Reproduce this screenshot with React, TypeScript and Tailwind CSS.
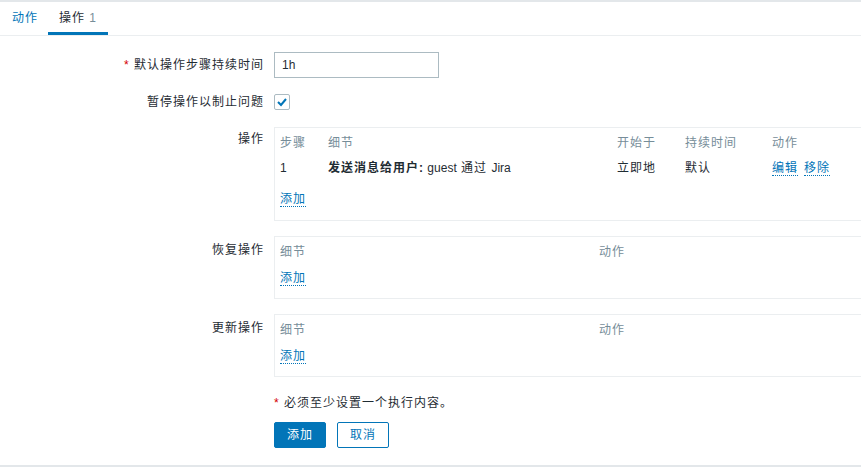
import React from "react";

const font = { fontFamily: '"Liberation Sans", Arial, "Noto Sans CJK SC", sans-serif' };

function Link({ children }: { children: React.ReactNode }) {
  return (
    <span className="text-[#0275b8] border-b border-dotted border-[#0275b8] leading-[13px] inline-block mr-[-1px]">
      {children}
    </span>
  );
}

function L({ children }: { children: React.ReactNode }) {
  return <span className="tracking-normal">{children}</span>;
}

function Row({ label, children, labelClass }: { label: React.ReactNode; children: React.ReactNode; labelClass: string }) {
  return (
    <div className="flex">
      <div className={"w-[263px] shrink-0 text-right " + labelClass}>
        <span className="mr-[-1px]">{label}</span>
      </div>
      <div className="ml-[11px] flex-1">{children}</div>
    </div>
  );
}

function SmallBox() {
  return (
    <div className="w-[620px] border border-[#ebeef0] pl-[5px] pb-[10px]">
      <div className="grid grid-cols-[319px_1fr] h-[30px] leading-[30px] text-[#768d99]">
        <div>细节</div>
        <div>动作</div>
      </div>
      <div className="h-[20px] mt-[1px] leading-[20px]">
        <Link>添加</Link>
      </div>
    </div>
  );
}

export default function App() {
  return (
    <div
      className="w-[861px] h-[467px] overflow-hidden bg-white border-t-2 border-b-2 border-[#e3e7ea] text-[12px] tracking-[1px] text-[#1f2c33] box-border"
      style={font}
    >
      <div className="flex h-[34px] border-b border-[#ebeef0]">
        <div className="pl-[12px] pr-[10px] pt-[9px] text-[#0275b8] leading-[14px]">动作</div>
        <div className="pl-[11px] pr-[12px] pt-[9px] leading-[14px] border-b-[3px] border-[#0275b8] h-[33px]">
          操作 <span className="text-[#768d99] tracking-normal">1</span>
        </div>
      </div>

      <div className="mt-[16px]">
        <Row
          labelClass="leading-[26px]"
          label={
            <>
              <span className="text-[#d40000]">*</span> 默认操作步骤持续时间
            </>
          }
        >
          <div className="w-[165px] h-[26px] border border-[#acbbc2] pl-[7px] leading-[24px] tracking-normal">1h</div>
        </Row>

        <div className="mt-[16px]">
          <Row labelClass="leading-[16px]" label="暂停操作以制止问题">
            <div className="w-[16px] h-[16px] border border-[#acbbc2] rounded-[2px] flex items-center justify-center">
              <svg width="12" height="12" viewBox="0 0 12 12">
                <path d="M2 6 L5 9 L10 3" fill="none" stroke="#0275b8" strokeWidth="2" />
              </svg>
            </div>
          </Row>
        </div>

        <div className="mt-[17px]">
          <Row labelClass="pt-[5px] leading-[14px]" label="操作">
            <div className="w-[620px] border border-[#ebeef0] pl-[5px] pb-[11px]">
              <div className="grid grid-cols-[48px_289px_68px_87px_1fr] h-[30px] leading-[30px] text-[#768d99]">
                <div>步骤</div>
                <div>细节</div>
                <div>开始于</div>
                <div>持续时间</div>
                <div>动作</div>
              </div>
              <div className="grid grid-cols-[48px_289px_68px_87px_1fr] h-[20px] leading-[20px]">
                <div className="tracking-normal">1</div>
                <div>
                  <span className="font-bold">发送消息给用户<L>:</L></span> <L>guest</L> 通过 <L>Jira</L>
                </div>
                <div>立即地</div>
                <div>默认</div>
                <div>
                  <Link>编辑</Link>
                  <span className="inline-block w-[7px]"></span>
                  <Link>移除</Link>
                </div>
              </div>
              <div className="h-[20px] mt-[11px] leading-[20px]">
                <Link>添加</Link>
              </div>
            </div>
          </Row>
        </div>

        <div className="mt-[15px]">
          <Row labelClass="pt-[7px] leading-[14px]" label="恢复操作">
            <SmallBox />
          </Row>
        </div>

        <div className="mt-[15px]">
          <Row labelClass="pt-[7px] leading-[14px]" label="更新操作">
            <SmallBox />
          </Row>
        </div>

        <div className="ml-[274px] mt-[19px] leading-[14px]">
          <span className="text-[#d40000]">*</span> 必须至少设置一个执行内容。
        </div>

        <div className="ml-[274px] mt-[12px] flex gap-[11px]">
          <button className="w-[52px] h-[26px] bg-[#0275b8] text-white rounded-[2px] border border-[#0275b8] tracking-[1px]">添加</button>
          <button className="w-[52px] h-[26px] bg-white text-[#0275b8] rounded-[2px] border border-[#0275b8] tracking-[1px]">取消</button>
        </div>
      </div>
    </div>
  );
}
